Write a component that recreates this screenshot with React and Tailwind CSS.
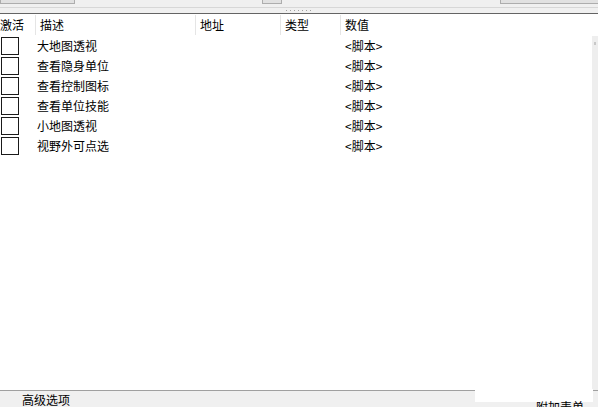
import React from 'react';

const COLS = [
  { label: '激活', w: 'w-[36px]', pad: 'pl-0' },
  { label: '描述', w: 'w-[160px]', pad: 'pl-[4px]' },
  { label: '地址', w: 'w-[85px]', pad: 'pl-[4px]' },
  { label: '类型', w: 'w-[60px]', pad: 'pl-[4px]' },
  { label: '数值', w: 'flex-1', pad: 'pl-[4px]' },
];

const ROWS = ['大地图透视', '查看隐身单位', '查看控制图标', '查看单位技能', '小地图透视', '视野外可点选'];

export default function App() {
  return (
    <div
      className="w-[598px] h-[407px] overflow-hidden flex flex-col bg-white text-[12px] text-[#000]"
      style={{ fontFamily: '"Noto Sans CJK SC", "Noto Sans", sans-serif' }}
    >
      {/* Top toolbar remains */}
      <div className="h-[7px] bg-[#f0f0f0] flex shrink-0">
        <div className="w-[75px] h-[4px] bg-[#e1e1e1] border border-t-0 border-[#adadad]" />
        <div className="w-[187px]" />
        <div className="w-[20px] h-[4px] bg-[#e1e1e1] border border-t-0 border-[#adadad]" />
        <div className="flex-1" />
        <div className="w-[98px] h-[4px] bg-[#e1e1e1] border border-t-0 border-r-0 border-[#adadad]" />
      </div>
      <div className="h-[1px] bg-[#d7d7d7] shrink-0" />
      {/* Splitter */}
      <div className="h-[5px] bg-[#f0f0f0] flex justify-center items-center shrink-0">
        <div className="flex gap-[3px] pr-[2px]">
          {Array.from({ length: 7 }).map((_, i) => (
            <span key={i} className="w-[1px] h-[1px] bg-[#a0a0a0]" />
          ))}
        </div>
      </div>
      <div className="h-[1px] bg-[#646464] shrink-0" />

      {/* List */}
      <div className="flex-1 flex min-h-0">
        <div className="flex-1 flex flex-col">
          <div className="h-[22px] flex items-center shrink-0">
            {COLS.map((c, i) => (
              <div
                key={c.label}
                className={`${c.w} ${c.pad} h-[20px] flex items-center leading-none ${i < COLS.length - 1 ? 'border-r border-[#e5e5e5]' : ''}`}
              >
                {c.label}
              </div>
            ))}
          </div>
          {ROWS.map((r) => (
            <div key={r} className="h-[20px] flex items-center">
              <div className="w-[37px] h-[20px] pl-[1px] pt-[1px]">
                <div className="w-[18px] h-[18px] border border-[#1a1a1a] bg-white" />
              </div>
              <div className="w-[244px] leading-none">{r}</div>
              <div className="w-[64px]" />
              <div className="leading-none">&lt;脚本&gt;</div>
            </div>
          ))}
        </div>
        <div className="w-[6px] mt-[22px] bg-[#eeeeee] flex justify-center">
          <span className="mt-[6px] w-[2px] h-[3px] bg-[#c8c8c8]" />
        </div>
      </div>

      {/* Bottom bar */}
      <div className="relative h-[17px] shrink-0 border-t border-[#a0a0a0] bg-[#f0f0f0]">
        <div className="pl-[22px] pt-[3px] leading-none">高级选项</div>
        <div className="absolute left-[475px] top-[-2px] w-[118px] h-[13px] bg-white" />
        <div className="absolute left-[536px] top-[10px] leading-none">附加表单</div>
      </div>
    </div>
  );
}
